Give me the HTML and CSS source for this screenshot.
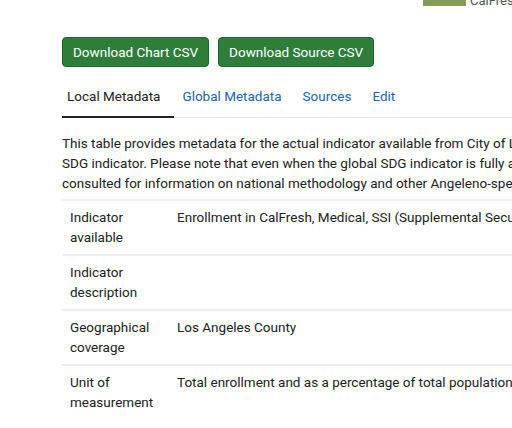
FILE: index.html
```html
<!DOCTYPE html>
<html>
<head>
<meta charset="utf-8">
<link rel="stylesheet" href="styles.css">
</head>
<body>
<div class="page">
  <div class="legend">
    <span class="swatch"></span><span class="legend-label">CalFresh</span>
  </div>
  <div class="buttons">
    <button class="btn">Download Chart CSV</button>
    <button class="btn">Download Source CSV</button>
  </div>
  <nav class="tabs">
    <a class="tab active">Local Metadata</a>
    <a class="tab">Global Metadata</a>
    <a class="tab">Sources</a>
    <a class="tab">Edit</a>
  </nav>
  <p class="intro">This table provides metadata for the actual indicator available from City of Los Angeles that is the closest match to the global<br>SDG indicator. Please note that even when the global SDG indicator is fully available, the global metadata should be<br>consulted for information on national methodology and other Angeleno-specific details.</p>
  <table class="meta">
    <tr><th>Indicator available</th><td>Enrollment in CalFresh, Medical, SSI (Supplemental Security Income)</td></tr>
    <tr><th>Indicator description</th><td></td></tr>
    <tr><th>Geographical coverage</th><td>Los Angeles County</td></tr>
    <tr><th>Unit of measurement</th><td>Total enrollment and as a percentage of total population</td></tr>
  </table>
</div>
</body>
</html>
```
FILE: styles.css
```css
html, body {
  margin: 0;
  padding: 0;
  overflow: hidden;
  background: #fff;
}
body {
  font-family: Roboto, "Noto Sans", sans-serif;
  font-size: 13.5px;
  color: #212121;
}
.page {
  width: 900px;
  padding-left: 62px;
}
.legend {
  display: flex;
  height: 6px;
  margin-left: 361px;
  overflow: hidden;
}
.swatch {
  display: block;
  width: 43px;
  height: 6px;
  background: #869b5a;
}
.legend-label {
  margin-left: 4px;
  font-size: 13px;
  line-height: 13px;
  color: #555;
  position: relative;
  top: -6px;
}
.buttons {
  display: flex;
  gap: 9px;
  margin-top: 31px;
}
.btn {
  font-family: Roboto, sans-serif;
  font-size: 13.5px;
  color: #fff;
  background: #2f7d3b;
  border: 1px solid #1e6a2a;
  border-radius: 4px;
  height: 30px;
  padding: 0 10px;
  line-height: 28px;
}
.tabs {
  display: flex;
  margin-top: 18px;
  border-bottom: 1px solid #e6e6e6;
  width: 450px;
}
.tab {
  display: block;
  padding: 0 13px 0 8px;
  height: 31px;
  line-height: 22px;
  color: #1a62b4;
}
.tab.active {
  padding: 0 14px 0 5px;
  color: #212121;
  border-bottom: 2px solid #212121;
  margin-bottom: -1px;
}
.intro {
  margin: 15px 0 0;
  line-height: 20px;
  width: 820px;
}
.meta {
  margin-top: 6px;
  border-collapse: collapse;
  width: 760px;
}
.meta th, .meta td {
  border-top: 2px solid #eeeeee;
  vertical-align: top;
  text-align: left;
  font-weight: normal;
  padding: 6px 8px 0;
  height: 47px;
  line-height: 20px;
}
.meta th {
  width: 91px;
}
```
